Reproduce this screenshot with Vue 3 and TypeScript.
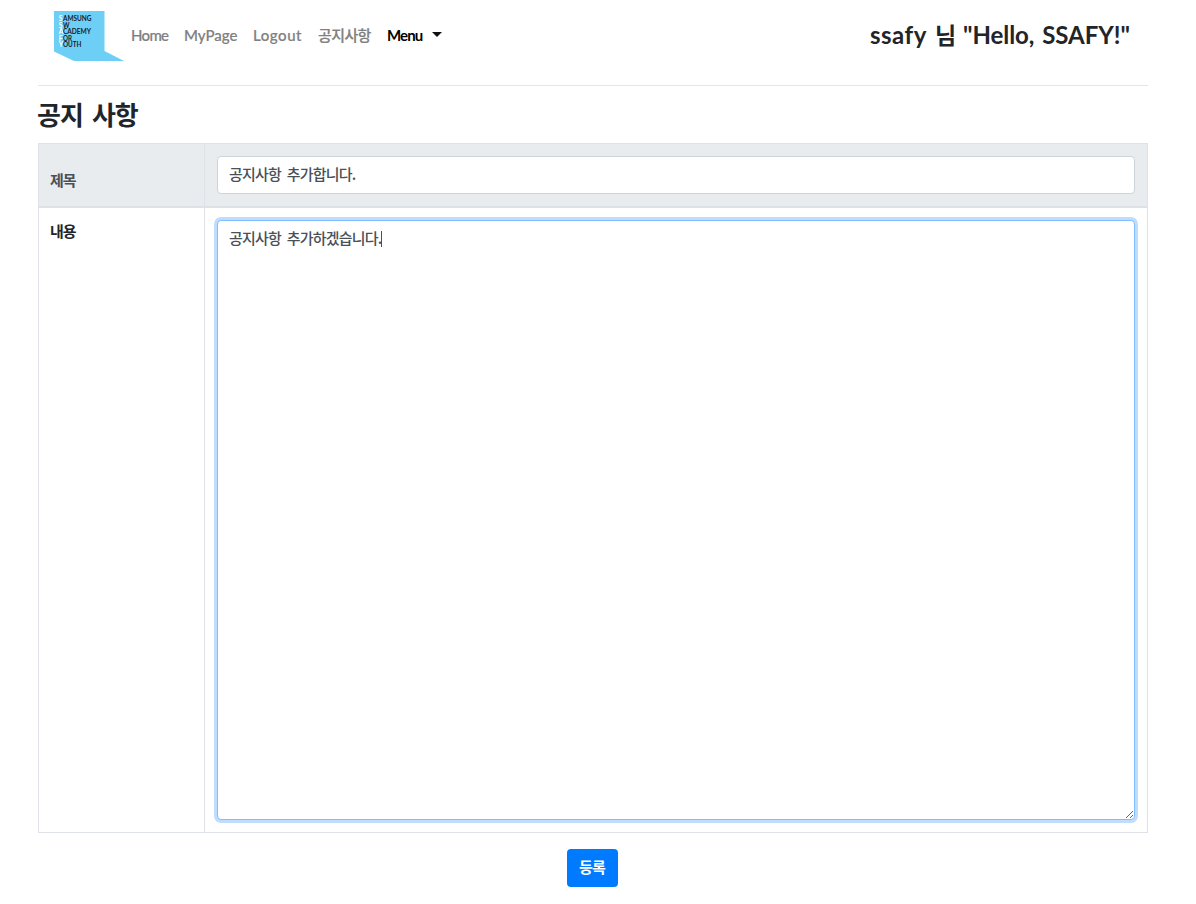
<script setup lang="ts">
import { ref } from 'vue'

const logoLines = [
  { first: 'S', rest: 'AMSUNG', y: 9.9, width: 28.5 },
  { first: 'S', rest: 'W', y: 16.5, width: 6.5 },
  { first: 'A', rest: 'CADEMY', y: 23.1, width: 28 },
  { first: 'F', rest: 'OR', y: 29.7, width: 9 },
  { first: 'Y', rest: 'OUTH', y: 36.3, width: 18.5 },
]
const links = [
  { label: 'Home', cls: 'home' },
  { label: 'MyPage', cls: 'mypage' },
  { label: 'Logout', cls: 'logout' },
  { label: '공지사항', cls: 'notice' },
]
const title = ref('공지사항 추가합니다.')
const content = ref('공지사항 추가하겠습니다.')
</script>

<template>
  <div class="page">
    <header class="navbar">
      <svg class="logo" width="70" height="50" viewBox="0 0 70 50">
        <path d="M0 0H50.500V40L70 50H20L0 40.500Z" fill="#6dcff6" />
        <g v-for="line in logoLines" :key="line.y" class="logo-line">
          <text class="initial" x="4.800" :y="line.y">{{ line.first }}</text>
          <text x="9" :y="line.y" :textLength="line.width" lengthAdjust="spacingAndGlyphs">{{ line.rest }}</text>
        </g>
      </svg>
      <nav class="links">
        <a v-for="l in links" :key="l.cls" :class="['link', l.cls]">{{ l.label }}</a>
        <a class="link menu">Menu</a>
        <i class="arrow"></i>
      </nav>
      <div class="greeting"><span class="user">ssafy</span><span class="nim">님</span><span class="hello">"Hello, SSAFY!"</span></div>
    </header>

    <h3 class="heading">공지 사항</h3>

    <form class="table" @submit.prevent>
      <div class="label head">제목</div>
      <div class="cell head"><input v-model="title" class="control" type="text" /></div>
      <div class="label">내용</div>
      <div class="cell body">
        <textarea v-model="content" class="control area" spellcheck="false"></textarea>
        <span class="caret"></span>
      </div>
    </form>

    <div class="actions"><button class="submit" type="button">등록</button></div>
  </div>
</template>

<style>
body {
  margin: 0;
  background: #fff;
}
</style>

<style scoped>
.page,
.page * {
  box-sizing: border-box;
}
.page {
  width: 1196px;
  height: 904px;
  padding: 0 48px 0 38px;
  overflow: hidden;
  color: #212529;
  font-family: Lato, "Noto Sans CJK KR", sans-serif;
  font-size: 16px;
  line-height: 24px;
}
.navbar {
  display: flex;
  align-items: flex-start;
  height: 86px;
  padding: 11px 16px 0;
  border-bottom: 1px solid #e5e5e5;
}
.logo {
  flex: none;
}
.logo-line {
  fill: #17212b;
  font-family: Lato, sans-serif;
  font-size: 6.8px;
  font-weight: 700;
}
.initial {
  fill: #fff;
}
.links {
  display: flex;
  align-items: center;
  height: 24px;
  margin: 12px 0 0 7px;
}
.link {
  margin-right: 16px;
  color: #808080;
  font-weight: 500;
  font-size: 15px;
  white-space: nowrap;
  -webkit-text-stroke: 0.2px currentColor;
}
.home {
  width: 37px;
  letter-spacing: -0.700px;
}
.mypage {
  width: 53px;
}
.logout {
  width: 49px;
  letter-spacing: 0.550px;
}
.notice {
  width: 53px;
  font-family: "Noto Sans CJK KR", sans-serif;
  letter-spacing: -0.600px;
}
.menu {
  width: 36px;
  margin-right: 9px;
  color: #000;
  font-weight: 700;
  font-size: 15px;
  letter-spacing: -0.900px;
  -webkit-text-stroke: 0;
}
.arrow {
  border: 5px solid transparent;
  border-top-color: #111;
  border-bottom: 0;
  margin-top: -2px;
}
.greeting {
  display: flex;
  margin: 8px 0 0 auto;
  width: 262px;
  height: 32px;
  line-height: 32px;
  font-size: 24px;
  font-weight: 700;
  white-space: nowrap;
}
.user {
  width: 65px;
  letter-spacing: 0.500px;
}
.nim {
  width: 28px;
  font-size: 23px;
}
.hello {
  font-size: 24px;
  word-spacing: 2px;
  letter-spacing: -0.050px;
}
.heading {
  height: 32px;
  margin: 12px 0 13px -1px;
  font-family: "Noto Sans CJK KR", sans-serif;
  font-size: 26px;
  line-height: 32px;
  font-weight: 700;
  letter-spacing: -0.950px;
  word-spacing: 4px;
}
.table {
  display: grid;
  grid-template-columns: 166px 1fr;
  grid-template-rows: 64px 624px;
  border: 1px solid #dee2e6;
  border-left: 0;
}
.label {
  padding: 11px 11px;
  border-left: 1px solid #dee2e6;
  font-family: "Noto Sans CJK KR", sans-serif;
  font-weight: 700;
  font-size: 15px;
  letter-spacing: -1px;
}
.cell {
  padding: 12px;
  border-left: 1px solid #dee2e6;
}
.head {
  background: #e9ecef;
  border-bottom: 2px solid #dee2e6;
  color: #495057;
}
.label.head {
  padding-top: 24px;
}
.body {
  position: relative;
}
.control {
  display: block;
  width: 918px;
  height: 38px;
  margin: 0;
  padding: 4px 11px 8px;
  border: 1px solid #ced4da;
  border-radius: 4px;
  outline: 0;
  background: #fff;
  color: #495057;
  font-family: "Noto Sans CJK KR", sans-serif;
  font-size: 15px;
  font-weight: 500;
  line-height: 24px;
  letter-spacing: -0.780px;
  word-spacing: 3px;
}
.area {
  height: 600px;
  padding-top: 5px;
  border-color: #80bdff;
  box-shadow: 0 0 0 3px #bfdeff;
  resize: both;
  overflow: auto;
}
.caret {
  position: absolute;
  left: 176px;
  top: 23px;
  width: 1px;
  height: 16px;
  background: #495057;
}
.actions {
  display: flex;
  justify-content: center;
  margin: 16px 2px 0 0;
}
.submit {
  width: 51px;
  height: 38px;
  padding: 0 0 4px;
  border: 0;
  border-radius: 4px;
  background: #007bff;
  color: #fff;
  font-family: "Noto Sans CJK KR", sans-serif;
  font-size: 15px;
  font-weight: 700;
  letter-spacing: -0.800px;
}
</style>
